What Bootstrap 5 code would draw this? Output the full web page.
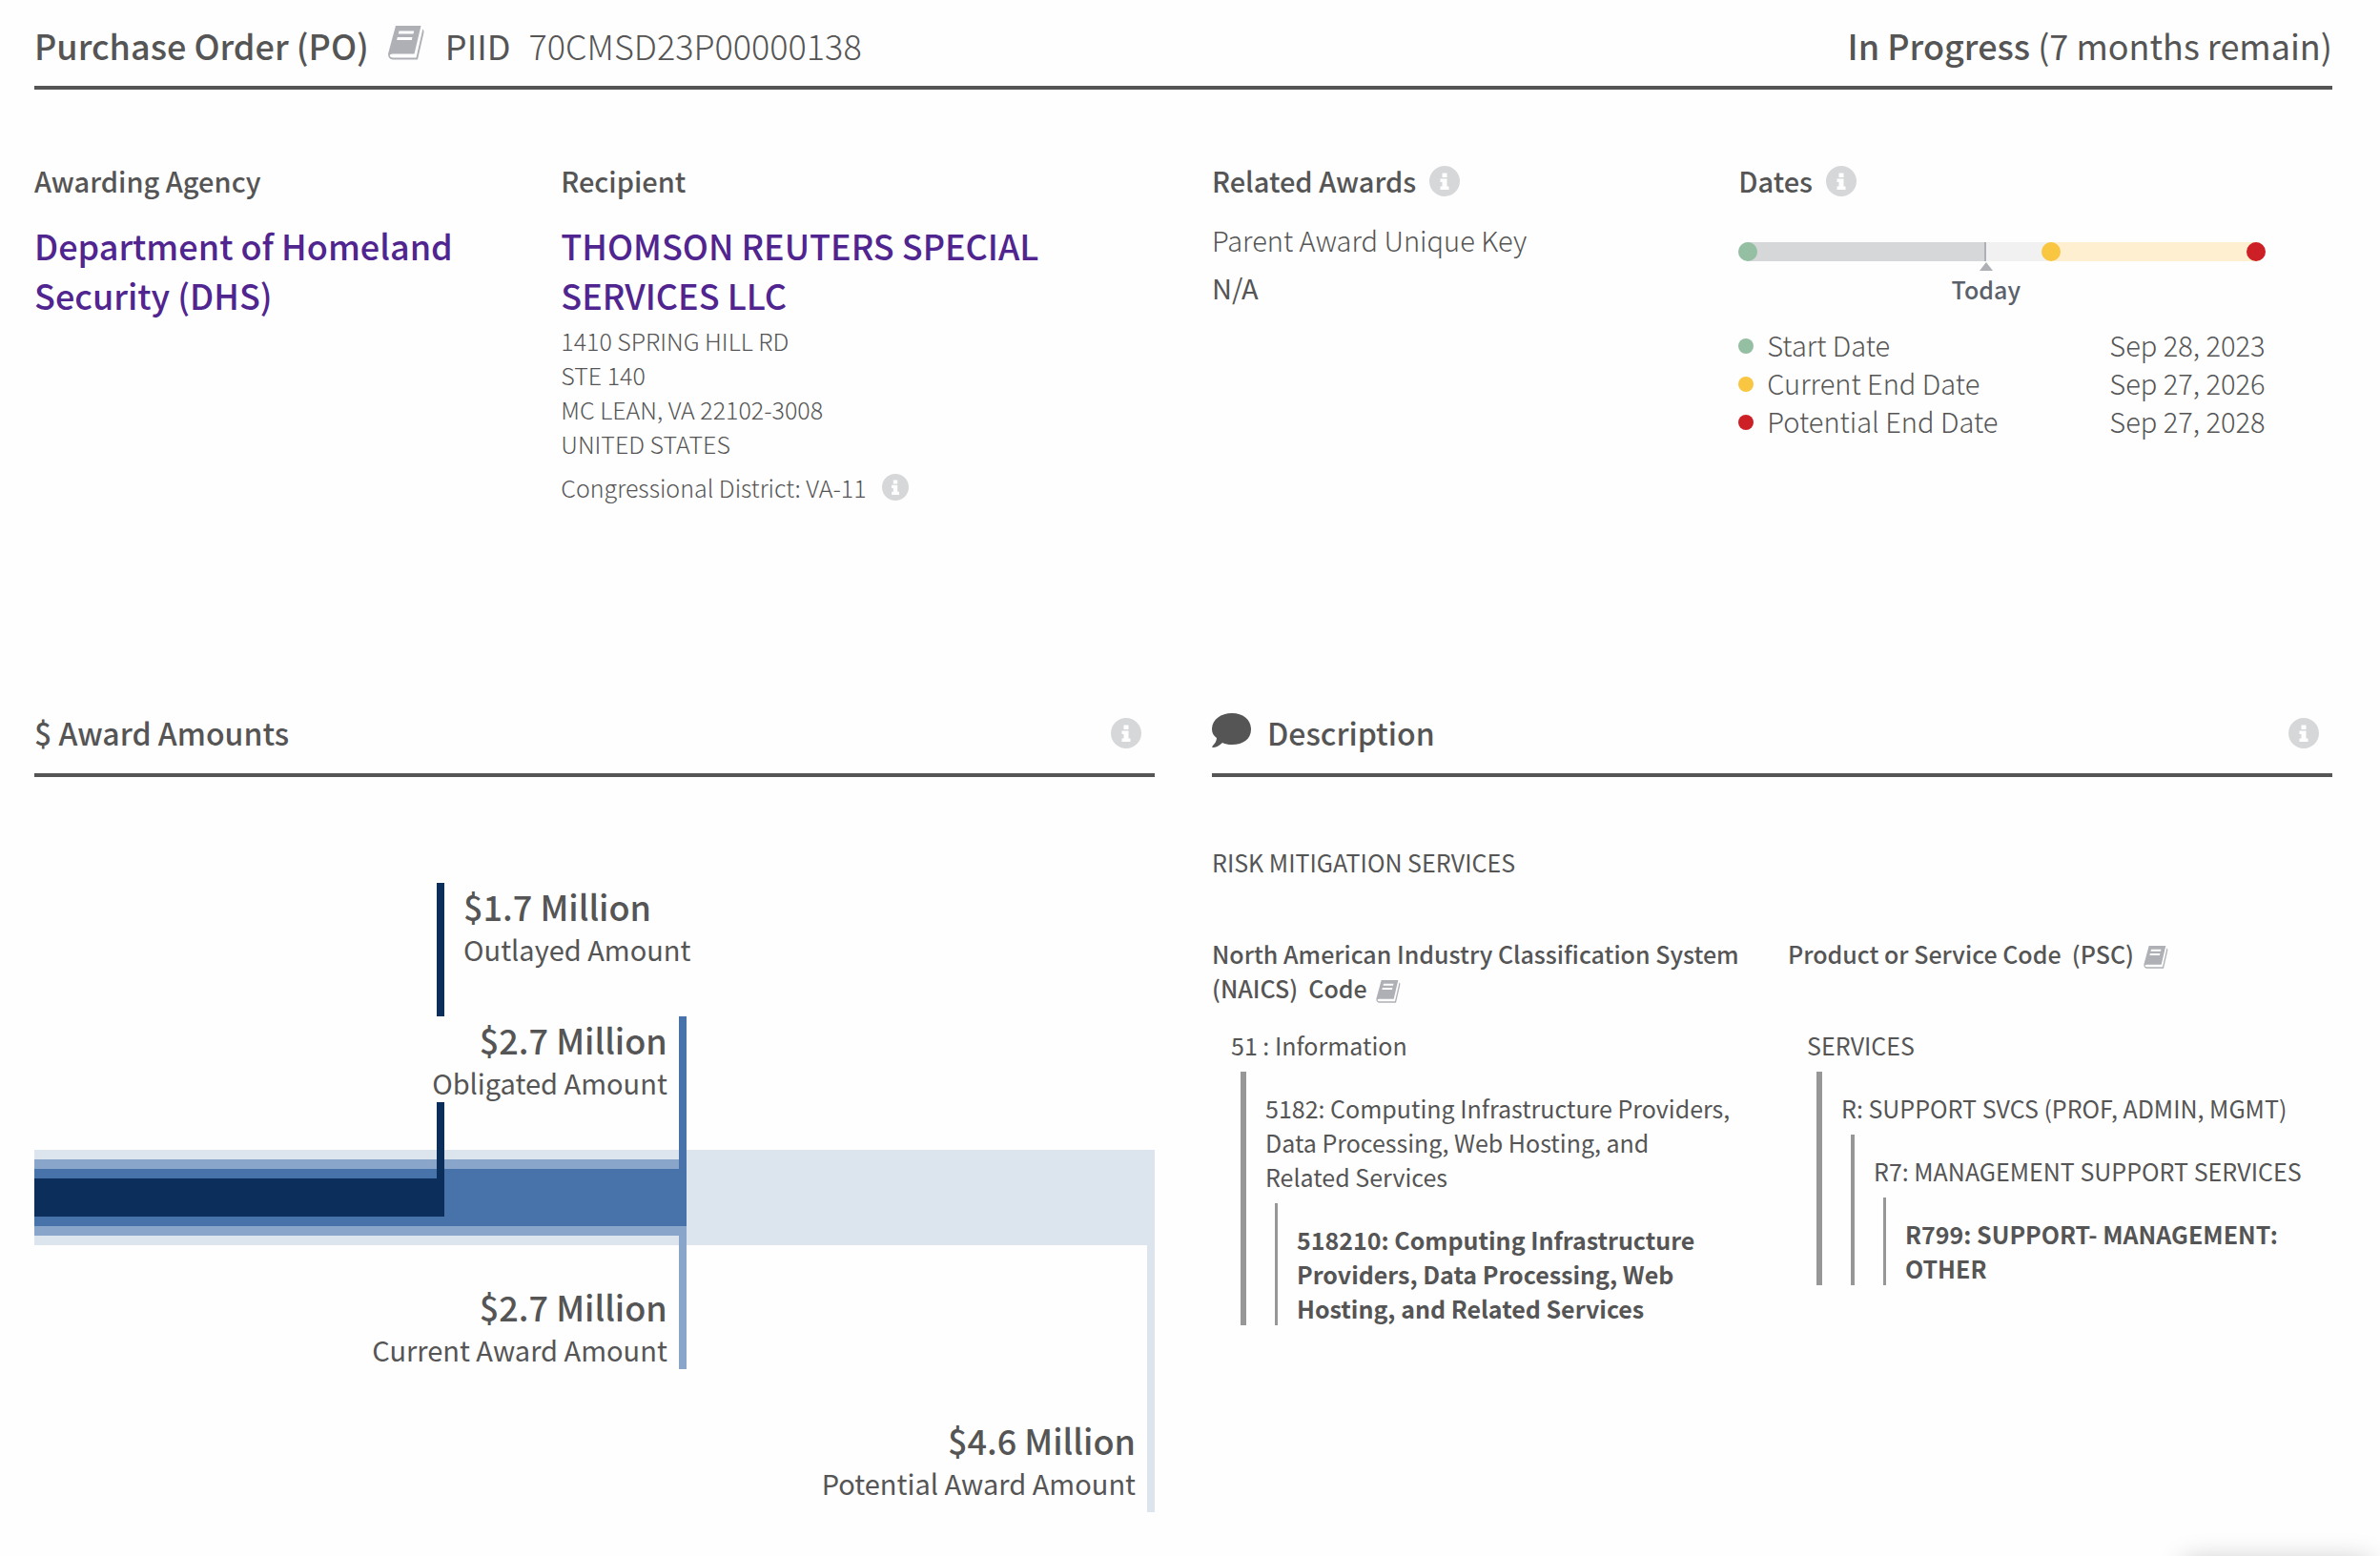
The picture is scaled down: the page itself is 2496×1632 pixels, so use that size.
<!DOCTYPE html>
<html lang="en">
<head>
<meta charset="utf-8">
<meta name="viewport" content="width=device-width, initial-scale=1">
<title>Purchase Order 70CMSD23P00000138</title>
<link href="https://cdn.jsdelivr.net/npm/bootstrap@5.3.0/dist/css/bootstrap.min.css" rel="stylesheet">
<style>
  body { font-family: "Noto Sans CJK SC", "Noto Sans", sans-serif; color: #555; background: #fefefe; font-size: 25px; line-height: 36px; overflow-x: hidden; }
  .page { padding: 21px 50px 0 36px; }
  .rule { border-bottom: 4px solid #555; }
  .topbar { padding-bottom: 17px; }
  .sechead { padding-bottom: 19px; }
  .semi { font-weight: 500; }
  .thin { font-weight: 300; }
  .t36 { font-size: 36px; line-height: 52px; }
  .t32 { font-size: 32px; line-height: 48px; }
  .t29 { font-size: 29px; line-height: 40px; }
  .split { column-gap: 60px; }
  .split > * { flex: 1 1 0; min-width: 0; }
  .sub47 { width: 47%; flex: none; }
  .visited { color: #51258f; text-decoration: none; display: block; font-weight: 500; }
  .plain { border: 0; background: none; padding: 0; line-height: 0; }
  .headrow .plain { margin: 1px 0 0 14px; }
  .sechead .plain { margin: 1px 14px 0 auto; }
  .info { width: 32px; height: 32px; fill: #d6d7d9; }
  .info-sm { width: 28px; height: 28px; }
  .book { width: 38px; height: 36px; fill: #aeb0b5; }
  .book-sm { width: 26px; height: 24px; }
  .topbook { margin: 0 22px 4px 20px; }
  .piid { margin-right: 19px; }
  .overview { min-height: 650px; padding-top: 75px; }
  .headrow { height: 40px; margin-bottom: 22px; }
  .gap-line { margin-top: 10px; }

  .timeline { height: 20px; margin-top: 45px; background: #f1f1f1; border-radius: 10px; display: flex; }
  .dot { width: 16px; height: 16px; border-radius: 50%; flex: none; margin: 4px 14px 0 0; }
  .dot-lg { width: 20px; height: 20px; border-radius: 50%; flex: none; }
  .c-start { background: #94bfa2; } .c-cur { background: #f9c642; } .c-end { background: #cd2026; }
  .elapsed { background: #d6d7d9; border-right: 2px solid #aeb0b5; margin-left: -10px; }
  .extend { background: #fdefcf; margin: 0 -10px; flex: 1; }
  .today { display: flex; flex-direction: column; align-items: center; width: 94%; color: #5b616b; font-size: 25px; }
  .today::before { content: ""; border: 7px solid transparent; border-top: 0; border-bottom: 9px solid #aeb0b5; margin: 1px 0; }
  .legend { margin-top: 20px; }

  .chart { display: grid; grid-template-columns: 100%; grid-template-rows: 140px 140px 10px 10px 10px 40px 10px 10px 10px 130px 10px 140px; margin-top: 111px; }
  .chart > * { grid-column: 1; justify-self: start; }
  .chart .amount { font-size: 36px; line-height: 48px; font-weight: 500; }
  .chart .what { font-size: 29px; line-height: 42px; }
  .k-pot { background: #dce4ee; }
  .k-cur { background: #89a5c9; }
  .k-obl { background: #4773aa; }
  .k-out { background: #0b2e5a; }
  .stem { border-right: 8px solid transparent; text-align: right; padding-right: 12px; }
  .s-pot { border-color: #dce4ee; }
  .s-cur { border-color: #89a5c9; }
  .s-obl { border-color: #4773aa; }
  .s-out { border-color: #0b2e5a; }
  .stem .patch { background: #fefefe; display: inline-block; }
  .below { padding-top: 40px; }

  .blurb { margin: 71px 0 60px; }
  .codes { column-gap: 33px; }
  .codes > * { flex: 1 1 0; min-width: 0; }
  .codehead { height: 72px; font-weight: 500; }
  .tree { margin-left: 10px; padding: 20px 0 0 20px; border-left: 6px solid #979797; margin-top: 10px; }
  .tree .tree { border-left-width: 3px; }
  .tree .mid { border-left-width: 4px; }
  .codetop { padding: 0 24px 0 20px; margin-top: 24px; }
  .floater { position: fixed; right: 8px; bottom: -64px; width: 200px; height: 60px; border-radius: 12px; box-shadow: 0 0 28px rgba(0,0,0,.22); }
</style>
<script src="https://cdn.jsdelivr.net/npm/bootstrap@5.3.0/dist/js/bootstrap.bundle.min.js"></script>
</head>
<body>
<svg class="d-none" aria-hidden="true">
  <symbol id="i-info" viewBox="0 0 32 32"><path fill-rule="evenodd" d="M16 0a16 16 0 1 0 0 32a16 16 0 1 0 0-32zM13.5 7.500h5v4.500h-5zM11.500 13.500h7v8h2v3.500h-9v-3.500h2v-4.500h-2z"/></symbol>
  <symbol id="i-book" viewBox="0 0 38 36"><path fill-rule="evenodd" d="M8 0H34.500L27.500 29.500H5Q1.800 29.500 1.800 31.500Q2.500 33.500 5 33.500H29.500L36 5V3.500Q38 4.500 37.500 7L31 35.500H5Q0 35 0 29.500zM11.500 5.500L10.800 8.500H26.500L27.200 5.500zM9.800 12L9.100 15H24.800L25.500 12z"/></symbol>
  <symbol id="i-comment" viewBox="0 0 42 36"><path d="M21 0C33 0 41 7 41 17S33 33 21 33C17 33 14 32.500 11 31C8 34 4 36 1 36C0 36 0 35 1 34C3 32 5 29 5 26C2 24 0 21 0 17C0 7 9 0 21 0z"/></symbol>
</svg>
<main class="page">
  <header class="rule topbar d-flex justify-content-between t36">
    <div class="d-flex align-items-center">
      <span class="semi">Purchase Order (PO)</span>
      <button class="plain topbook" aria-label="Glossary: Purchase Order"><svg class="book"><use href="#i-book"/></svg></button>
      <span class="piid">PIID</span><span class="thin">70CMSD23P00000138</span>
    </div>
    <div><span class="semi">In Progress</span> (7 months remain)</div>
  </header>

  <section class="overview d-flex split">
    <div class="d-flex">
      <div class="sub47">
        <div class="headrow d-flex align-items-center t29 semi">Awarding Agency</div>
        <a href="#" class="visited t36">Department of Homeland<br>Security (DHS)</a>
      </div>
      <div class="sub47">
        <div class="headrow d-flex align-items-center t29 semi">Recipient</div>
        <a href="#" class="visited t36">THOMSON REUTERS SPECIAL<br>SERVICES LLC</a>
        <address class="thin mb-0 pt-1">1410 SPRING HILL RD<br>STE 140<br>MC LEAN, VA 22102-3008<br>UNITED STATES</address>
        <div class="thin d-flex align-items-center gap-line">Congressional District: VA-11 <button class="plain ms-3" aria-label="About congressional districts"><svg class="info info-sm"><use href="#i-info"/></svg></button></div>
      </div>
    </div>
    <div class="d-flex">
      <div class="sub47">
        <div class="headrow d-flex align-items-center t29 semi">Related Awards <button class="plain" aria-label="About related awards"><svg class="info"><use href="#i-info"/></svg></button></div>
        <div class="t29 thin">Parent Award Unique Key</div>
        <div class="t29 gap-line">N/A</div>
      </div>
      <div class="sub47">
        <div class="headrow d-flex align-items-center t29 semi mb-0">Dates <button class="plain" aria-label="About dates"><svg class="info"><use href="#i-info"/></svg></button></div>
        <div class="timeline">
          <span class="dot-lg c-start position-relative"></span>
          <span class="elapsed" style="width:45.3%"></span>
          <span style="width:10.5%"></span>
          <span class="dot-lg c-cur position-relative z-1"></span>
          <span class="extend"></span>
          <span class="dot-lg c-end position-relative"></span>
        </div>
        <div class="today semi">Today</div>
        <ul class="list-unstyled t29 thin mb-0 legend">
          <li class="d-flex align-items-center"><span class="dot c-start"></span>Start Date<span class="ms-auto">Sep 28, 2023</span></li>
          <li class="d-flex align-items-center"><span class="dot c-cur"></span>Current End Date<span class="ms-auto">Sep 27, 2026</span></li>
          <li class="d-flex align-items-center"><span class="dot c-end"></span>Potential End Date<span class="ms-auto">Sep 27, 2028</span></li>
        </ul>
      </div>
    </div>
  </section>

  <div class="d-flex split">
    <section>
      <h2 class="rule sechead d-flex align-items-center t32 semi mb-0">$ Award Amounts <button class="plain" aria-label="About award amounts"><svg class="info"><use href="#i-info"/></svg></button></h2>
      <div class="chart">
        <div class="k-pot w-100" style="grid-row:3/10"></div>
        <div class="k-cur" style="grid-row:4/9;width:58.2%"></div>
        <div class="k-obl" style="grid-row:5/8;width:58.2%"></div>
        <div class="k-out" style="grid-row:6/7;width:36.6%"></div>
        <div class="stem s-out" style="grid-row:1/7;width:36.6%"></div>
        <div style="grid-row:1/2;margin-left:38.3%"><div class="amount">$1.7 Million</div><div class="what">Outlayed Amount</div></div>
        <div class="stem s-obl" style="grid-row:2/8;width:58.2%"><div class="patch"><div class="amount">$2.7 Million</div><div class="what">Obligated Amount</div></div></div>
        <div class="stem s-cur" style="grid-row:8/11;width:58.2%"></div>
        <div class="stem below" style="grid-row:10/12;width:58.2%"><div class="amount">$2.7 Million</div><div class="what">Current Award Amount</div></div>
        <div class="stem s-pot w-100" style="grid-row:10/13"></div>
        <div class="stem below w-100" style="grid-row:12/13"><div class="amount">$4.6 Million</div><div class="what">Potential Award Amount</div></div>
      </div>
    </section>
    <section>
      <h2 class="rule sechead d-flex align-items-center t32 semi mb-0"><svg class="me-3 mb-1" width="42" height="36" fill="#555"><use href="#i-comment"/></svg>Description <button class="plain" aria-label="About the description"><svg class="info"><use href="#i-info"/></svg></button></h2>
      <p class="blurb">RISK MITIGATION SERVICES</p>
      <div class="d-flex codes">
        <div>
          <div class="codehead">North American Industry Classification System (NAICS)&nbsp; Code <button class="plain ms-1" aria-label="Glossary: NAICS"><svg class="book book-sm"><use href="#i-book"/></svg></button></div>
          <div class="codetop">51 : Information
            <div class="tree">5182: Computing Infrastructure Providers, Data Processing, Web Hosting, and Related Services
              <div class="tree fw-bold">518210: Computing Infrastructure Providers, Data Processing, Web Hosting, and Related Services</div>
            </div>
          </div>
        </div>
        <div>
          <div class="codehead">Product or Service Code&nbsp; (PSC) <button class="plain ms-1" aria-label="Glossary: PSC"><svg class="book book-sm"><use href="#i-book"/></svg></button></div>
          <div class="codetop">SERVICES
            <div class="tree">R: SUPPORT SVCS (PROF, ADMIN, MGMT)
              <div class="tree mid">R7: MANAGEMENT SUPPORT SERVICES
                <div class="tree fw-bold">R799: SUPPORT- MANAGEMENT: OTHER</div>
              </div>
            </div>
          </div>
        </div>
      </div>
    </section>
  </div>
</main>
<div class="floater" aria-hidden="true"></div>
</body>
</html>
